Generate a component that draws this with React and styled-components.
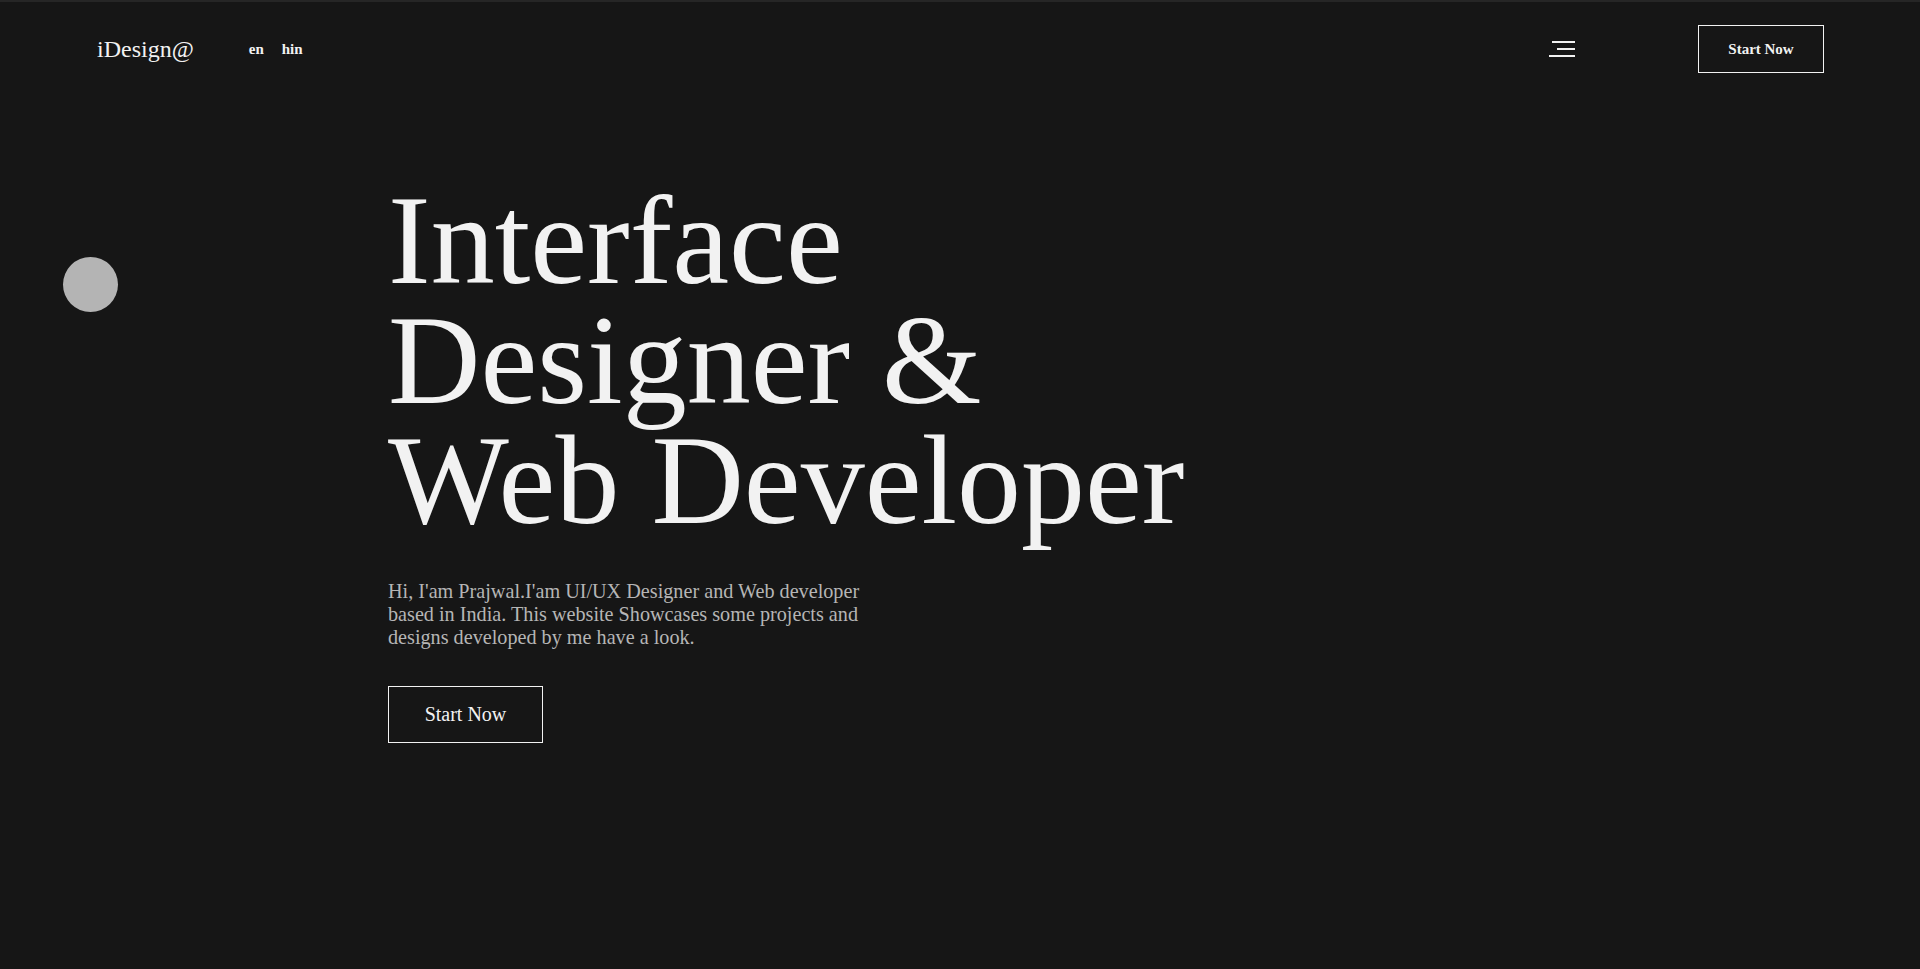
import styled, { createGlobalStyle } from "styled-components";

const Global = createGlobalStyle`
  html, body {
    margin: 0;
    padding: 0;
    background: #161616;
  }
  body {
    font-family: "Liberation Serif", "Times New Roman", serif;
    color: #f2f2f2;
  }
  * { box-sizing: border-box; }
`;

const Page = styled.div`
  position: relative;
  height: 100vh;
  background: #161616;
  border-top: 2px solid #262626;
  overflow: hidden;
`;

const Header = styled.header`
  height: 94px;
  padding: 0 96px 0 97px;
  display: flex;
  align-items: center;
  justify-content: space-between;
`;

const Left = styled.div`
  display: flex;
  align-items: center;
  gap: 55px;
`;

const Logo = styled.a`
  font-size: 24px;
  color: #f2f2f2;
  text-decoration: none;
`;

const Langs = styled.div`
  display: flex;
  gap: 18px;
`;

const Lang = styled.span`
  font-size: 15px;
  font-weight: 700;
  color: #f2f2f2;
`;

const Right = styled.div`
  display: flex;
  align-items: center;
  gap: 123px;
`;

const Burger = styled.button`
  width: 27px;
  height: 16px;
  padding: 0;
  border: 0;
  background: none;
  display: flex;
  flex-direction: column;
  align-items: flex-end;
  justify-content: space-between;
  cursor: pointer;
`;

const Bar = styled.span`
  display: block;
  height: 2px;
  width: ${(p) => p.w}px;
  background: #f2f2f2;
`;

const Button = styled.button`
  font-family: "Liberation Serif", "Times New Roman", serif;
  background: transparent;
  color: #f2f2f2;
  border: 1px solid #f2f2f2;
  cursor: pointer;
  font-size: ${(p) => (p.small ? "15px" : "20px")};
  font-weight: ${(p) => (p.small ? 700 : 400)};
  width: ${(p) => (p.small ? "126px" : "155px")};
  height: ${(p) => (p.small ? "48px" : "57px")};
  padding: 0;
`;

const Hero = styled.section`
  padding: 84px 0 0 388px;
`;

const Title = styled.h1`
  margin: 0;
  font-weight: 400;
  font-size: 128px;
  line-height: 120px;
  color: #f2f2f2;
`;

const Intro = styled.p`
  margin: 40px 0 37px;
  max-width: 495px;
  font-size: 20.2px;
  line-height: 23px;
  color: #b5b5b5;
`;

const Blob = styled.div`
  position: absolute;
  left: 63px;
  top: 255px;
  width: 55px;
  height: 55px;
  border-radius: 50%;
  background: #b4b4b4;
`;

export default function App() {
  return (
    <>
      <Global />
      <Page>
        <Header>
          <Left>
            <Logo href="#">iDesign@</Logo>
            <Langs>
              <Lang>en</Lang>
              <Lang>hin</Lang>
            </Langs>
          </Left>
          <Right>
            <Burger aria-label="menu">
              <Bar w={23} />
              <Bar w={18} />
              <Bar w={26} />
            </Burger>
            <Button small>Start Now</Button>
          </Right>
        </Header>
        <Hero>
          <Title>
            Interface
            <br />
            Designer &amp;
            <br />
            Web Developer
          </Title>
          <Intro>
            Hi, I'am Prajwal.I'am UI/UX Designer and Web developer based in
            India. This website Showcases some projects and designs developed by
            me have a look.
          </Intro>
          <Button>Start Now</Button>
        </Hero>
        <Blob />
      </Page>
    </>
  );
}
